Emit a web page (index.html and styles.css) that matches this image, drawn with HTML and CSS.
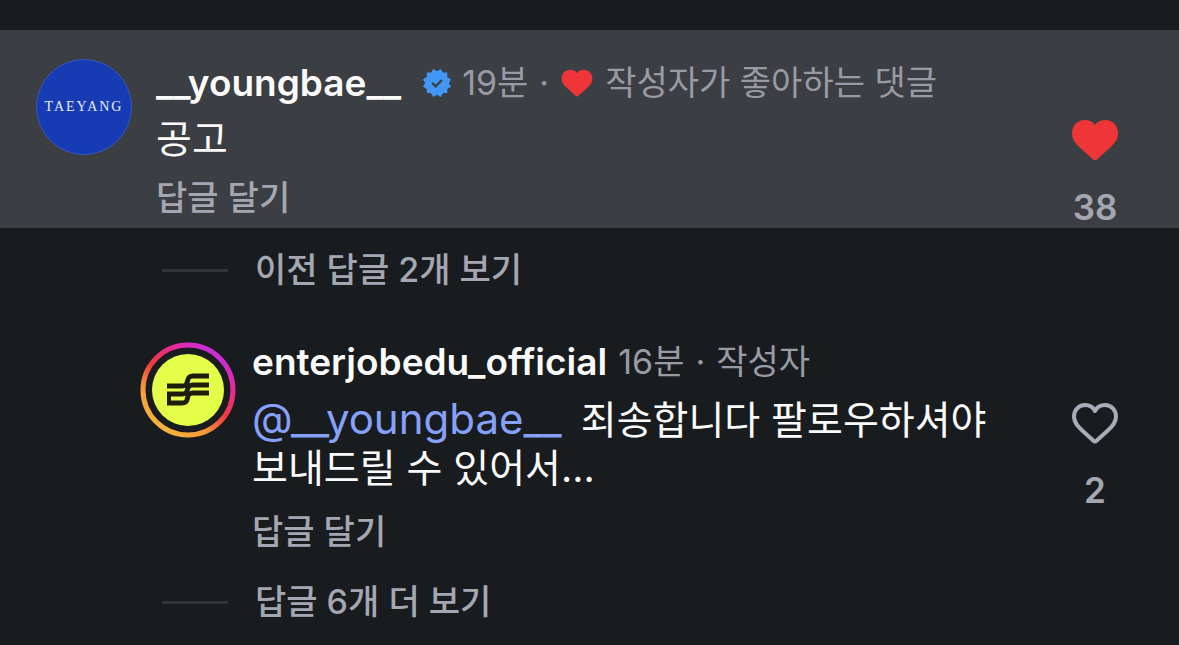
FILE: index.html
```html
<!DOCTYPE html>
<html lang="ko">
<head>
    <meta charset="UTF-8">
    <meta name="viewport" content="width=device-width, initial-scale=1.0">
    <title>댓글</title>
    <link rel="stylesheet" href="styles.css">
</head>
<body>

<main class="comments">

    <!-- Pinned comment -->
    <article class="comment highlighted">
        <div class="avatar avatar-blue">TAEYANG</div>
        <div class="comment-body">
            <div class="comment-header">
                <a class="username" href="#">__youngbae__</a>
                <svg class="verified" viewBox="0 0 40 40" aria-label="인증됨">
                    <path fill="#4397f4" d="M19.998 3.094 14.638 0l-2.972 5.15H5.432v6.354L0 14.64 3.094 20 0 25.359l5.432 3.137v5.905h5.975L14.638 40l5.36-3.094L25.358 40l3.232-5.6h6.162v-6.01L40 25.359 36.905 20 40 14.641l-5.248-3.03v-6.46h-6.419L25.358 0l-5.36 3.094Z"/>
                    <path fill="#3b3e42" d="m18.1 27-6.100-6 2.200-2.300 3.900 3.700 7.800-7.900 2.300 2.300L18.100 27Z"/>
                </svg>
                <span>19분</span>
                <span>·</span>
                <svg class="small-heart" viewBox="0 0 48 42" aria-hidden="true">
                    <path fill="#ee3537" d="M24 6C26.400 2.600 30 1 34.300 1 41.700 1 47 6.800 47 14.200c0 7-4.500 11.300-9.200 15.600L26.200 40.200c-1.300 1.200-3.100 1.200-4.400 0L10.200 29.800C5.500 25.500 1 21.200 1 14.200 1 6.800 6.300 1 13.700 1 18 1 21.600 2.600 24 6Z"/>
                </svg>
                <span>작성자가 좋아하는 댓글</span>
            </div>
            <p class="comment-text">공고</p>
            <button class="reply-button">답글 달기</button>
        </div>
        <button class="like-button" aria-label="좋아요 취소">
            <svg viewBox="0 0 48 42" aria-hidden="true">
                <path fill="#ee3537" d="M24 6C26.400 2.600 30 1 34.300 1 41.700 1 47 6.800 47 14.200c0 7-4.500 11.300-9.200 15.600L26.200 40.200c-1.300 1.200-3.100 1.200-4.400 0L10.200 29.800C5.500 25.500 1 21.200 1 14.200 1 6.800 6.300 1 13.700 1 18 1 21.600 2.600 24 6Z"/>
            </svg>
            <span>38</span>
        </button>
    </article>

    <!-- Replies -->
    <section class="replies">
        <button class="more-button">이전 답글 2개 보기</button>

        <article class="comment reply">
            <div class="avatar">
                <svg viewBox="0 0 96 96" aria-hidden="true">
                    <defs>
                        <linearGradient id="ring" gradientUnits="userSpaceOnUse" x1="20" y1="88" x2="76" y2="8">
                            <stop offset="0" stop-color="#f8b43c"/>
                            <stop offset="0.25" stop-color="#f59a3a"/>
                            <stop offset="0.5" stop-color="#ef3b3c"/>
                            <stop offset="0.75" stop-color="#ea2a92"/>
                            <stop offset="1" stop-color="#c62de0"/>
                        </linearGradient>
                    </defs>
                    <circle cx="48" cy="48" r="45" fill="none" stroke="url(#ring)" stroke-width="5"/>
                    <circle cx="48" cy="48" r="36" fill="#e4ff4a"/>
                    <g fill="none" stroke="#1d1d0c" stroke-width="5">
                        <path d="M27 44h15c9 0 2-10 11-10h16"/>
                        <path d="M27 52h15c9 0 2-9 11-9h16"/>
                        <path d="M27 61h15c9 0 2-10 11-10h16"/>
                        <path stroke-width="4" d="M29 50v13"/>
                    </g>
                </svg>
            </div>
            <div class="comment-body">
                <div class="comment-header">
                    <a class="username" href="#">enterjobedu_official</a>
                    <span>16분</span>
                    <span>·</span>
                    <span>작성자</span>
                </div>
                <p class="comment-text"><a class="mention" href="#">@__youngbae__</a> 죄송합니다 팔로우하셔야<br>보내드릴 수 있어서...</p>
                <button class="reply-button">답글 달기</button>
            </div>
            <button class="like-button" aria-label="좋아요">
                <svg viewBox="0 0 48 42" aria-hidden="true">
                    <path fill="none" stroke="#a9acb6" stroke-width="4" stroke-linejoin="round" d="M24 9C26 5 29.600 3 34 3c6.400 0 11 5 11 11.500 0 6-3.500 9.800-8.500 14.300L25.500 38.800c-.9.800-2.100.8-3 0L11.500 28.800C6.500 24.300 3 20.500 3 14.500 3 8 7.600 3 14 3c4.400 0 8 2 10 6Z"/>
                </svg>
                <span>2</span>
            </button>
        </article>

        <button class="more-button">답글 6개 더 보기</button>
    </section>

</main>

</body>
</html>
```
FILE: styles.css
```css
* { box-sizing: border-box; }

body {
    margin: 0;
    background-color: #191c1f;
    color: #fafafa;
    font-family: Inter, "Noto Sans CJK KR", sans-serif;
    font-size: 34px;
    line-height: 48px;
}

a { color: inherit; text-decoration: none; }

button {
    display: block;
    padding: 0;
    border: none;
    background: none;
    color: #a4a7b1;
    font: inherit;
    font-weight: 500;
    cursor: pointer;
}

svg { display: block; }

.comments { padding-top: 30px; }

/* Comment */
.comment {
    display: flex;
    align-items: flex-start;
    padding: 29px 36px 4px;
}
.highlighted { background-color: #3b3e42; }

.avatar {
    flex: none;
    width: 96px;
    height: 96px;
    margin-right: 24px;
}
.avatar-blue {
    border: 1px solid #3a58b8;
    border-radius: 50%;
    background-color: #173bb3;
    color: #e4ecff;
    font-family: "Liberation Serif", serif;
    font-size: 14px;
    letter-spacing: 2px;
    line-height: 94px;
    text-align: center;
}

.comment-body { flex: 1; min-width: 0; }
.comment-header {
    display: flex;
    align-items: center;
    gap: 11px;
    height: 48px;
    color: #989ba4;
    white-space: nowrap;
}
.username { color: #fafafa; font-size: 37px; font-weight: 600; }
.verified { width: 28px; height: 28px; margin-left: 11px; }
.small-heart { width: 32px; height: 28px; margin: 0 1px; }

.comment-text {
    margin: 8px 0 11px;
    font-size: 39px;
    word-break: keep-all;
}
.mention { margin-right: 8px; color: #86a1fa; font-size: 42px; line-height: 1; }

/* Like column */
.like-button {
    flex: none;
    width: 96px;
    margin-top: 60px;
    font-size: 35px;
    font-weight: 600;
    line-height: 34px;
}
.like-button svg { width: 48px; height: 42px; margin: 0 auto 29px; }
.like-button span { display: block; }

/* Replies */
.replies { padding: 18px 0; }
.reply { padding: 48px 36px 22px 140px; }
.reply .avatar { margin-right: 16px; }
.reply .comment-body { margin-top: -4px; }
.reply .comment-text { margin: 10px 0 16px; }

.more-button {
    display: flex;
    align-items: center;
    gap: 27px;
    margin-left: 162px;
}
.more-button::before {
    content: "";
    width: 66px;
    height: 3px;
    background-color: #303337;
}
```
